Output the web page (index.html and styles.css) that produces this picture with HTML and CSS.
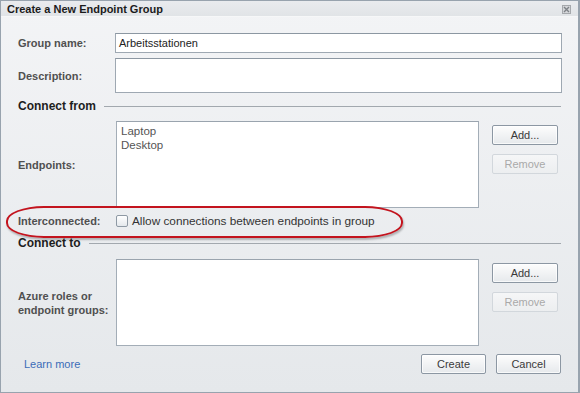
FILE: index.html
```html
<!DOCTYPE html>
<html>
<head>
<meta charset="utf-8">
<link rel="stylesheet" href="styles.css">
</head>
<body>
<div class="dialog">
  <div class="titlebar">
    <span class="title">Create a New Endpoint Group</span>
    <svg class="close" width="9" height="9" viewBox="0 0 9 9">
      <rect x="0.5" y="0.5" width="8" height="8" fill="#d4d6d9" stroke="#a5a8ac"/>
      <path d="M2 2 L7 7 M7 2 L2 7" stroke="#7e8287" stroke-width="1.4"/>
    </svg>
  </div>
  <div class="content">
    <div class="field-row">
      <label class="label">Group name:</label>
      <div class="input">Arbeitsstationen</div>
    </div>
    <div class="field-row row-desc">
      <label class="label">Description:</label>
      <div class="input tall"></div>
    </div>
    <div class="section section-from">
      <span class="section-title">Connect from</span>
      <span class="rule"></span>
    </div>
    <div class="list-row row-endpoints">
      <label class="label">Endpoints:</label>
      <div class="listbox">
        <div class="item">Laptop</div>
        <div class="item">Desktop</div>
      </div>
      <div class="btn-col">
        <button class="btn">Add...</button>
        <button class="btn disabled">Remove</button>
      </div>
    </div>
    <div class="check-row">
      <label class="label">Interconnected:</label>
      <span class="checkbox"></span>
      <span class="check-text">Allow connections between endpoints in group</span>
    </div>
    <div class="section section-to">
      <span class="section-title">Connect to</span>
      <span class="rule"></span>
    </div>
    <div class="list-row row-azure">
      <label class="label">Azure roles or<br>endpoint groups:</label>
      <div class="listbox"></div>
      <div class="btn-col">
        <button class="btn">Add...</button>
        <button class="btn disabled">Remove</button>
      </div>
    </div>
    <div class="footer">
      <a class="link">Learn more</a>
      <div class="footer-btns">
        <button class="btn wide">Create</button>
        <button class="btn wide">Cancel</button>
      </div>
    </div>
  </div>
  <div class="highlight"></div>
</div>
</body>
</html>
```

FILE: styles.css
```css
html, body {
  margin: 0;
  padding: 0;
  background: #ffffff;
}
body {
  font-family: "Liberation Sans", Arial, sans-serif;
  font-size: 11px;
  color: #333;
}
.dialog {
  position: relative;
  box-sizing: border-box;
  width: 580px;
  height: 393px;
  border: 1px solid #98a3ae;
  border-right-width: 2px;
  background: linear-gradient(#f3f4f6, #e5e8eb);
  display: flex;
  flex-direction: column;
}
.titlebar {
  height: 15px;
  border-bottom: 1px solid #f6f7f8;
  background: linear-gradient(#e9ebee, #e1e4e7);
  display: flex;
  align-items: center;
  justify-content: space-between;
  padding: 0 7px 0 6px;
}
.title {
  font-weight: bold;
  font-size: 11px;
  color: #1b1b1b;
}
.close {
  display: block;
  margin-top: 1px;
}
.content {
  padding: 16px 16px 0 17px;
  display: flex;
  flex-direction: column;
}
.label {
  font-weight: bold;
  font-size: 11px;
  color: #505050;
  line-height: 14px;
}
.field-row {
  display: flex;
  align-items: center;
}
.field-row .label {
  width: 97px;
  flex: none;
}
.input {
  flex: 1;
  box-sizing: border-box;
  height: 20px;
  border: 1px solid #9ea8b2;
  border-top-color: #8c97a2;
  background: #fff;
  padding: 0 3px;
  line-height: 18px;
  color: #222;
  font-size: 11px;
}
.input.tall {
  height: 35px;
}
.row-desc {
  margin-top: 5px;
}
.section {
  display: flex;
  align-items: center;
  height: 14px;
}
.section-from {
  margin-top: 6px;
}
.section-to {
  margin-top: 7px;
}
.section-title {
  font-weight: bold;
  font-size: 12px;
  color: #1e1e1e;
}
.rule {
  flex: 1;
  height: 1px;
  background: #a2a8ae;
  margin-left: 8px;
  margin-right: 1px;
}
.list-row {
  display: flex;
  align-items: center;
}
.list-row .label {
  width: 98px;
  flex: none;
}
.row-endpoints {
  margin-top: 8px;
}
.row-azure {
  margin-top: 9px;
}
.listbox {
  box-sizing: border-box;
  width: 363px;
  height: 87px;
  border: 1px solid #a3adb7;
  border-top-color: #9aa4ae;
  background: #fff;
  padding: 2px 4px;
  flex: none;
}
.item {
  font-size: 11.5px;
  color: #555;
  line-height: 14px;
}
.btn-col {
  align-self: flex-start;
  display: flex;
  flex-direction: column;
  gap: 9px;
  margin-left: 13px;
  margin-top: 4px;
}
.btn {
  box-sizing: border-box;
  width: 66px;
  height: 20px;
  border: 1px solid #8c97a3;
  border-radius: 2px;
  background: linear-gradient(#fdfdfd, #e6e9ec);
  font-family: "Liberation Sans", Arial, sans-serif;
  font-size: 11px;
  color: #3a3a3a;
  padding: 0;
  box-shadow: inset 0 0 0 1px rgba(255,255,255,0.7);
}
.btn.disabled {
  border-color: #d2d7dc;
  background: linear-gradient(#f5f6f7, #eceef0);
  color: #a9a9a9;
  box-shadow: none;
}
.btn.wide {
  width: 65px;
}
.check-row {
  display: flex;
  align-items: center;
  height: 16px;
  margin-top: 5px;
}
.check-row .label {
  width: 98px;
  flex: none;
}
.checkbox {
  box-sizing: border-box;
  width: 12px;
  height: 12px;
  border: 1px solid #8e99a4;
  border-radius: 2px;
  background: linear-gradient(#ffffff, #e4e8ec);
  margin-right: 4px;
}
.check-text {
  font-size: 11.8px;
  color: #333;
}
.footer {
  margin-top: 8px;
  display: flex;
  align-items: center;
  justify-content: space-between;
  padding-left: 6px;
  padding-right: 1px;
}
.link {
  font-size: 11px;
  color: #3b6cb8;
}
.footer-btns {
  display: flex;
  gap: 10px;
}
.highlight {
  position: absolute;
  left: 5px;
  top: 205px;
  width: 393px;
  height: 28px;
  border: 2px solid #c3141e;
  border-radius: 38px / 15px;
  box-shadow: 1px 2px 2px rgba(0,0,0,0.25);
  pointer-events: none;
}
```
